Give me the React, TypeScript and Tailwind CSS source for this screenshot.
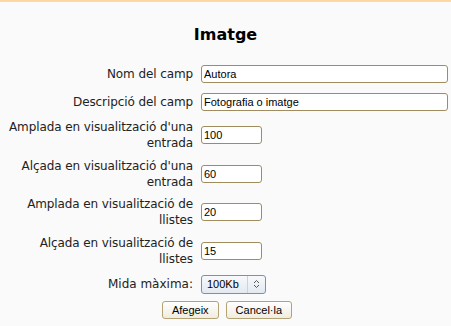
import React from 'react';

const labelFont = { fontFamily: '"DejaVu Sans", sans-serif' };
const fieldFont = { fontFamily: '"Liberation Sans", Arial, sans-serif' };

type Field = {
  lines: string[];
  value: string;
  wide?: boolean;
};

const fields: Field[] = [
  { lines: ['Nom del camp'], value: 'Autora', wide: true },
  { lines: ['Descripció del camp'], value: 'Fotografia o imatge', wide: true },
  { lines: ["Amplada en visualització d'una", 'entrada'], value: '100' },
  { lines: ["Alçada en visualització d'una", 'entrada'], value: '60' },
  { lines: ['Amplada en visualització de', 'llistes'], value: '20' },
  { lines: ['Alçada en visualització de', 'llistes'], value: '15' },
];

const TextInput = ({ value, wide }: { value: string; wide?: boolean }) => (
  <input
    type="text"
    defaultValue={value}
    style={fieldFont}
    className={
      'h-[18px] rounded-[3px] border border-[#a08d5f] bg-white px-[2px] text-[11px] text-black outline-none ' +
      (wide ? 'w-full' : 'w-[61px]')
    }
  />
);

const SizeSelect = () => (
  <div
    style={fieldFont}
    className="flex h-[19px] w-[65px] items-center rounded-[3px] border border-[#7193bb] bg-gradient-to-b from-[#f7f9fc] to-[#e3e9f1] text-[11px] text-black"
  >
    <span className="flex-1 pl-[5px]">100Kb</span>
    <span className="flex h-full w-[18px] items-center justify-center border-l border-[#c9d3de]">
      <svg width="7" height="10" viewBox="0 0 7 10" fill="none" stroke="#555" strokeWidth="1">
        <path d="M1 4 L3.5 1.5 L6 4" />
        <path d="M1 6 L3.5 8.5 L6 6" />
      </svg>
    </span>
  </div>
);

const FormButton = ({ children }: { children: React.ReactNode }) => (
  <button
    type="button"
    style={fieldFont}
    className="h-[18px] rounded-[3px] border border-[#b3a273] bg-gradient-to-b from-white to-[#f1ece0] px-[9px] text-[11px] leading-none text-black"
  >
    {children}
  </button>
);

export default function App() {
  return (
    <div className="min-h-[326px] w-full border-t-[2px] border-[#fcd9a0] bg-[#fafafa]">
      <h2
        style={labelFont}
        className="pt-[23px] text-center text-[16px] font-bold leading-[20px] text-black"
      >
        Imatge
      </h2>

      <div className="mt-[18px] grid grid-cols-[193px_1fr] gap-x-[8px] gap-y-[6px] pr-[3px]">
        {fields.map((f) => (
          <React.Fragment key={f.lines.join(' ')}>
            <div
              style={labelFont}
              className="flex min-h-[22px] flex-col items-end justify-center whitespace-nowrap text-right text-[12px] leading-[16.3px] tracking-[-0.1px] text-[#222]"
            >
              {f.lines.map((l) => (
                <span key={l}>{l}</span>
              ))}
            </div>
            <div className="flex items-center">
              <TextInput value={f.value} wide={f.wide} />
            </div>
          </React.Fragment>
        ))}
        <div
          style={labelFont}
          className="flex min-h-[22px] items-center justify-end text-[12px] text-[#222]"
        >
          Mida màxima:
        </div>
        <div className="flex items-center">
          <SizeSelect />
        </div>
      </div>

      <div className="mt-[6px] flex justify-center gap-[7px] pl-[3px]">
        <FormButton>Afegeix</FormButton>
        <FormButton>Cancel·la</FormButton>
      </div>
    </div>
  );
}
